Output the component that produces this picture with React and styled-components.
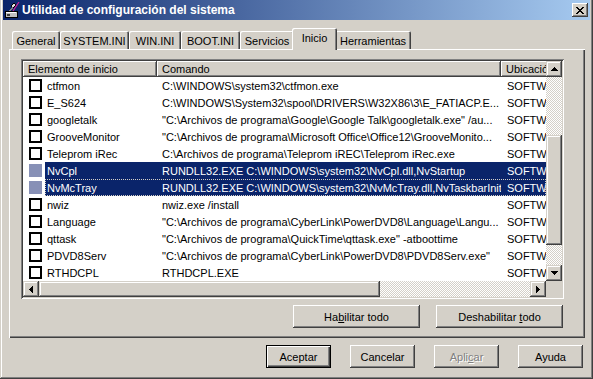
import styled, { createGlobalStyle } from "styled-components";

const FACE = "#D4D0C8";
const SHADOW = "#808080";
const DARK = "#404040";

// classic 3D edges
const raisedButton = `
  box-shadow: inset -1px -1px ${DARK}, inset 1px 1px #fff, inset -2px -2px ${SHADOW}, inset 2px 2px ${FACE};
`;
const raisedScroll = `
  box-shadow: inset -1px -1px ${DARK}, inset 1px 1px ${FACE}, inset -2px -2px ${SHADOW}, inset 2px 2px #fff;
`;
const dither = `
  background: repeating-conic-gradient(${FACE} 0 25%, #fff 0 50%) 0 0 / 2px 2px;
`;

const GlobalStyle = createGlobalStyle`
  * { box-sizing: border-box; }
  html, body { margin: 0; padding: 0; background: ${FACE}; }
  body {
    font-family: "Liberation Sans", Arial, sans-serif;
    font-size: 11px;
    color: #000;
  }
`;

const Window = styled.div`
  width: 593px;
  height: 379px;
  background: ${FACE};
  display: flex;
  flex-direction: column;
  padding: 0 3px 3px 3px;
  box-shadow: inset -1px -1px ${DARK}, inset 1px 0 ${FACE}, inset -2px -2px ${SHADOW}, inset 2px 0 #fff;
`;

const TitleBar = styled.div`
  height: 20px;
  display: flex;
  align-items: center;
  padding: 0 2px 0 1px;
  background: linear-gradient(to right, #0a246a, #a6caf0);
`;

const Title = styled.span`
  flex: 1;
  margin-left: 2px;
  color: #fff;
  font-weight: bold;
  font-size: 12px;
  white-space: nowrap;
`;

const CloseButton = styled.div`
  width: 16px;
  height: 14px;
  background: ${FACE};
  display: flex;
  align-items: center;
  justify-content: center;
  ${raisedButton}
`;

const Body = styled.div`
  flex: 1;
  display: flex;
  flex-direction: column;
  padding: 8px 5px 0 6px;
`;

const TabStrip = styled.div`
  height: 21px;
  display: flex;
  align-items: flex-end;
  padding-left: 3px;
  position: relative;
  z-index: 1;
`;

const Tab = styled.div`
  position: relative;
  z-index: ${(p) => (p.$active ? 2 : 1)};
  width: ${(p) => (p.$active ? p.$w + 4 : p.$w)}px;
  height: ${(p) => (p.$active ? 22 : 18)}px;
  margin: ${(p) => (p.$active ? "0 -2px -1px" : "0")};
  padding-top: ${(p) => (p.$active ? 3 : 3)}px;
  background: ${FACE};
  border-radius: 2px 2px 0 0;
  box-shadow: inset 1px 1px #fff, inset -1px 0 ${DARK}, inset -2px 0 ${SHADOW};
  text-align: center;
  line-height: 14px;
  white-space: nowrap;
`;

const Panel = styled.div`
  height: 289px;
  padding: 10px 0 0 12px;
  box-shadow: inset 1px 1px #fff, inset -1px -1px ${DARK}, inset -2px -2px ${SHADOW};
`;

const ListFrame = styled.div`
  width: 543px;
  height: 240px;
  padding: 2px;
  display: grid;
  grid-template-columns: 523px 16px;
  grid-template-rows: 220px 16px;
  box-shadow: inset 1px 1px ${SHADOW}, inset -1px -1px #fff, inset 2px 2px ${DARK}, inset -2px -2px ${FACE};
`;

const ListContent = styled.div`
  min-width: 0;
  background: #fff;
  overflow: hidden;
  white-space: nowrap;
`;

const Header = styled.div`
  display: flex;
  height: 16px;
`;

const HeaderCell = styled.div`
  flex-shrink: 0;
  width: ${(p) => p.$w}px;
  padding-left: 5px;
  line-height: 16px;
  overflow: hidden;
  background: ${FACE};
  ${raisedButton}
`;

const Row = styled.div`
  display: flex;
  height: 17px;
`;

const CheckArea = styled.div`
  width: 22px;
  flex-shrink: 0;
  display: flex;
  align-items: center;
  padding-left: 6px;
`;

const CheckBox = styled.div`
  width: 13px;
  height: 13px;
  border: ${(p) => (p.$selected ? "none" : "2px solid #000")};
  background: ${(p) => (p.$selected ? "#8790b6" : "#fff")};
`;

const RowBody = styled.div`
  flex: 1;
  min-width: 0;
  display: flex;
  line-height: 18px;
  background: ${(p) => (p.$selected ? "#0a246a" : "transparent")};
  color: ${(p) => (p.$selected ? "#fff" : "#000")};
  outline: ${(p) => (p.$focused ? `1px dotted ${FACE}` : "none")};
  outline-offset: -1px;
`;

const Cell = styled.div`
  flex-shrink: 0;
  width: ${(p) => p.$w}px;
  padding-left: ${(p) => p.$pad}px;
  overflow: hidden;
`;

const VScroll = styled.div`
  display: flex;
  flex-direction: column;
  ${dither}
`;

const HScroll = styled.div`
  display: flex;
  ${dither}
`;

const Corner = styled.div`
  background: ${FACE};
`;

const ArrowButton = styled.div`
  width: 16px;
  height: 16px;
  flex-shrink: 0;
  display: flex;
  align-items: center;
  justify-content: center;
  background: ${FACE};
  ${raisedScroll}
`;

const Thumb = styled.div`
  flex-shrink: 0;
  background: ${FACE};
  ${raisedScroll}
`;

const TrackGap = styled.div`
  flex: ${(p) => (p.$size ? `0 0 ${p.$size}px` : "1")};
`;

const ButtonRow = styled.div`
  width: 542px;
  margin-top: 6px;
  display: flex;
  justify-content: flex-end;
  gap: 16px;
`;

const Footer = styled.div`
  margin-top: 7px;
  padding-right: 2px;
  display: flex;
  justify-content: flex-end;
  gap: 19px;
`;

const Button = styled.div`
  width: ${(p) => p.$w}px;
  height: 23px;
  display: flex;
  align-items: center;
  justify-content: center;
  background: ${FACE};
  color: ${(p) => (p.$disabled ? SHADOW : "#000")};
  text-shadow: ${(p) => (p.$disabled ? "1px 1px #fff" : "none")};
  ${raisedButton}
  ${(p) =>
    p.$default &&
    `box-shadow: inset 0 0 0 1px #000, inset 2px 2px #fff, inset -2px -2px ${DARK}, inset -3px -3px ${SHADOW};`}
`;

const arrowPaths = {
  up: "M3 0h1v1h-1zM2 1h3v1h-3zM1 2h5v1h-5zM0 3h7v1h-7z",
  down: "M0 0h7v1h-7zM1 1h5v1h-5zM2 2h3v1h-3zM3 3h1v1h-1z",
  left: "M3 0h1v7h-1zM2 1h1v5h-1zM1 2h1v3h-1zM0 3h1v1h-1z",
  right: "M0 0h1v7h-1zM1 1h1v5h-1zM2 2h1v3h-1zM3 3h1v1h-1z",
};

function Arrow({ dir }) {
  const vertical = dir === "up" || dir === "down";
  return (
    <ArrowButton>
      <svg width={vertical ? 7 : 4} height={vertical ? 4 : 7} shapeRendering="crispEdges">
        <path d={arrowPaths[dir]} fill="#000" />
      </svg>
    </ArrowButton>
  );
}

function AppIcon() {
  return (
    <svg width="16" height="16" viewBox="0 0 16 16" shapeRendering="crispEdges">
      <path d="M1 9h12v6H1z" fill="#c0c0c0" stroke="#000" strokeWidth="1" />
      <path d="M2 10h10v1H2z" fill="#fff" />
      <path d="M3 12h3v2H3z" fill="#404040" />
      <path d="M7 4l3 -3 2 2 -3 3z" fill="#e0e0e0" stroke="#000" strokeWidth="1" />
      <path d="M5 9l3 -4 1 1 -3 3z" fill="#808080" />
      <path d="M15 0L9 9" stroke="#d0209a" strokeWidth="1.2" fill="none" shapeRendering="auto" />
    </svg>
  );
}

function CloseGlyph() {
  return (
    <svg width="8" height="7" shapeRendering="crispEdges">
      <path
        d="M0 0h2v1H0zM6 0h2v1H6zM1 1h2v1H1zM5 1h2v1H5zM2 2h4v1H2zM3 3h2v1H3zM2 4h4v1H2zM1 5h2v1H1zM5 5h2v1H5zM0 6h2v1H0zM6 6h2v1H6z"
        fill="#000"
      />
    </svg>
  );
}

const tabs = [
  { label: "General", w: 48 },
  { label: "SYSTEM.INI", w: 69 },
  { label: "WIN.INI", w: 52 },
  { label: "BOOT.INI", w: 59 },
  { label: "Servicios", w: 54 },
  { label: "Inicio", w: 41, active: true },
  { label: "Herramientas", w: 76 },
];

const RUN_KEY = "SOFTWARE\\Microsoft\\Windows\\CurrentVersion\\Run";

const items = [
  { name: "ctfmon", cmd: "C:\\WINDOWS\\system32\\ctfmon.exe" },
  { name: "E_S624", cmd: "C:\\WINDOWS\\System32\\spool\\DRIVERS\\W32X86\\3\\E_FATIACP.E..." },
  { name: "googletalk", cmd: "\"C:\\Archivos de programa\\Google\\Google Talk\\googletalk.exe\" /au..." },
  { name: "GrooveMonitor", cmd: "\"C:\\Archivos de programa\\Microsoft Office\\Office12\\GrooveMonito..." },
  { name: "Teleprom iRec", cmd: "C:\\Archivos de programa\\Teleprom iREC\\Teleprom iRec.exe" },
  { name: "NvCpl", cmd: "RUNDLL32.EXE C:\\WINDOWS\\system32\\NvCpl.dll,NvStartup", selected: true },
  { name: "NvMcTray", cmd: "RUNDLL32.EXE C:\\WINDOWS\\system32\\NvMcTray.dll,NvTaskbarInit", selected: true, focused: true },
  { name: "nwiz", cmd: "nwiz.exe /install" },
  { name: "Language", cmd: "\"C:\\Archivos de programa\\CyberLink\\PowerDVD8\\Language\\Langu..." },
  { name: "qttask", cmd: "\"C:\\Archivos de programa\\QuickTime\\qttask.exe\" -atboottime" },
  { name: "PDVD8Serv", cmd: "\"C:\\Archivos de programa\\CyberLink\\PowerDVD8\\PDVD8Serv.exe\"" },
  { name: "RTHDCPL", cmd: "RTHDCPL.EXE" },
];

export default function App() {
  return (
    <>
      <GlobalStyle />
      <Window>
        <TitleBar>
          <AppIcon />
          <Title>Utilidad de configuración del sistema</Title>
          <CloseButton>
            <CloseGlyph />
          </CloseButton>
        </TitleBar>
        <Body>
          <TabStrip>
            {tabs.map((t) => (
              <Tab key={t.label} $w={t.w} $active={t.active}>
                {t.label}
              </Tab>
            ))}
          </TabStrip>
          <Panel>
            <ListFrame>
              <ListContent>
                <Header>
                  <HeaderCell $w={134}>Elemento de inicio</HeaderCell>
                  <HeaderCell $w={344}>Comando</HeaderCell>
                  <HeaderCell $w={120}>Ubicación</HeaderCell>
                </Header>
                {items.map((it) => (
                  <Row key={it.name}>
                    <CheckArea>
                      <CheckBox $selected={it.selected} />
                    </CheckArea>
                    <RowBody $selected={it.selected} $focused={it.focused}>
                      <Cell $w={112} $pad={2}>{it.name}</Cell>
                      <Cell $w={344} $pad={5}>{it.cmd}</Cell>
                      <Cell $w={120} $pad={6}>{RUN_KEY}</Cell>
                    </RowBody>
                  </Row>
                ))}
              </ListContent>
              <VScroll>
                <Arrow dir="up" />
                <TrackGap $size={58} />
                <Thumb style={{ height: 110 }} />
                <TrackGap />
                <Arrow dir="down" />
              </VScroll>
              <HScroll>
                <Arrow dir="left" />
                <Thumb style={{ width: 341 }} />
                <TrackGap />
                <Arrow dir="right" />
              </HScroll>
              <Corner />
            </ListFrame>
            <ButtonRow>
              <Button $w={127}>
                <span>
                  Ha<u>b</u>ilitar todo
                </span>
              </Button>
              <Button $w={127}>
                <span>
                  Deshabilitar <u>t</u>odo
                </span>
              </Button>
            </ButtonRow>
          </Panel>
          <Footer>
            <Button $w={65} $default>
              Aceptar
            </Button>
            <Button $w={65}>Cancelar</Button>
            <Button $w={65} $disabled>
              <span>
                Apli<u>c</u>ar
              </span>
            </Button>
            <Button $w={65}>Ayuda</Button>
          </Footer>
        </Body>
      </Window>
    </>
  );
}
